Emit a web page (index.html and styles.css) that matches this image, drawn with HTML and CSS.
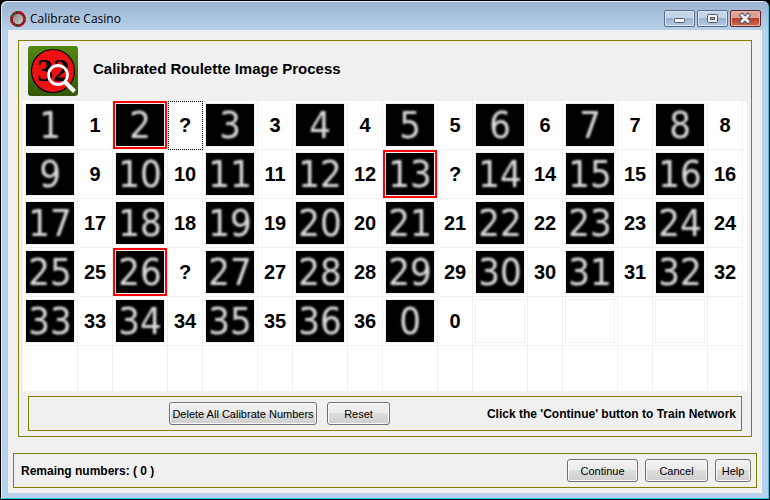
FILE: index.html
```html
<!DOCTYPE html>
<html lang="en">
<head>
  <meta charset="UTF-8">
  <meta name="viewport" content="width=device-width, initial-scale=1.0">
  <title>Calibrate Casino</title>
  <link rel="stylesheet" href="styles.css">
</head>
<body>
  <div class="window">
    <header class="titlebar">
      <svg class="app-icon" width="16" height="16" viewBox="0 0 16 16">
        <defs>
          <linearGradient id="wheel" x1="0" y1="0" x2="1" y2="1">
            <stop offset="0" stop-color="#777"/>
            <stop offset="1" stop-color="#ddd"/>
          </linearGradient>
        </defs>
        <circle cx="8" cy="8" r="6.6" fill="url(#wheel)" stroke="#222" stroke-width="2.6"/>
        <circle cx="8" cy="8" r="6.6" fill="none" stroke="#e01818" stroke-width="2.6" stroke-dasharray="1.5 1"/>
        <path d="M2.4 4.4l1.6-1.8" stroke="#1c7a2c" stroke-width="2"/>
      </svg>
      <span class="titlebar-text">Calibrate Casino</span>
      <div class="titlebar-buttons">
        <button type="button" class="win-btn" aria-label="Minimize">
          <svg width="31" height="17" viewBox="0 0 31 17"><rect x="10.500" y="8.500" width="10" height="4" rx="1" fill="#f4f4f4" stroke="#535666"/></svg>
        </button>
        <button type="button" class="win-btn" aria-label="Maximize">
          <svg width="31" height="17" viewBox="0 0 31 17"><rect x="10.500" y="4.500" width="10" height="8" rx="1" fill="#f4f4f4" stroke="#535666"/><rect x="13.500" y="7.500" width="4" height="2" fill="#9db6d0" stroke="#535666"/></svg>
        </button>
        <button type="button" class="win-btn close" aria-label="Close">
          <svg width="31" height="17" viewBox="0 0 31 17"><path d="M12 5.500l6 6M18 5.500l-6 6" stroke="#535666" stroke-width="4.600" stroke-linecap="square"/><path d="M12 5.500l6 6M18 5.500l-6 6" stroke="#f4f4f4" stroke-width="2.600" stroke-linecap="square"/></svg>
        </button>
      </div>
    </header>

    <main class="content">
      <section class="group calibrate">
        <div class="heading">
          <svg class="logo" width="50" height="50" viewBox="0 0 50 50">
            <defs>
              <linearGradient id="felt" x1="0" y1="0" x2="0" y2="1">
                <stop offset="0" stop-color="#548612"/>
                <stop offset="1" stop-color="#355808"/>
              </linearGradient>
            </defs>
            <rect width="50" height="50" rx="3" fill="url(#felt)"/>
            <circle cx="25" cy="25" r="21.500" fill="#ee1111" stroke="#100" stroke-width="1.200"/>
            <text x="25" y="35" class="logo-text">32</text>
            <circle cx="30" cy="29" r="9.500" fill="none" stroke="#fff" stroke-width="2.800"/>
            <path d="M36.500 35.500l10 10" stroke="#fff" stroke-width="4.200"/>
          </svg>
          <h1>Calibrated Roulette Image Process</h1>
        </div>

        <div class="grid-box">
          <table class="grid">
            <tr>
              <td class="pic"><div class="scan"><span>1</span></div></td><td class="num">1</td>
              <td class="pic unknown"><div class="scan"><span>2</span></div></td><td class="num focused">?</td>
              <td class="pic"><div class="scan"><span>3</span></div></td><td class="num">3</td>
              <td class="pic"><div class="scan"><span>4</span></div></td><td class="num">4</td>
              <td class="pic"><div class="scan"><span>5</span></div></td><td class="num">5</td>
              <td class="pic"><div class="scan"><span>6</span></div></td><td class="num">6</td>
              <td class="pic"><div class="scan"><span>7</span></div></td><td class="num">7</td>
              <td class="pic"><div class="scan"><span>8</span></div></td><td class="num">8</td>
            </tr>
            <tr>
              <td class="pic"><div class="scan"><span>9</span></div></td><td class="num">9</td>
              <td class="pic"><div class="scan"><span>10</span></div></td><td class="num">10</td>
              <td class="pic"><div class="scan"><span>11</span></div></td><td class="num">11</td>
              <td class="pic"><div class="scan"><span>12</span></div></td><td class="num">12</td>
              <td class="pic unknown"><div class="scan"><span>13</span></div></td><td class="num">?</td>
              <td class="pic"><div class="scan"><span>14</span></div></td><td class="num">14</td>
              <td class="pic"><div class="scan"><span>15</span></div></td><td class="num">15</td>
              <td class="pic"><div class="scan"><span>16</span></div></td><td class="num">16</td>
            </tr>
            <tr>
              <td class="pic"><div class="scan"><span>17</span></div></td><td class="num">17</td>
              <td class="pic"><div class="scan"><span>18</span></div></td><td class="num">18</td>
              <td class="pic"><div class="scan"><span>19</span></div></td><td class="num">19</td>
              <td class="pic"><div class="scan"><span>20</span></div></td><td class="num">20</td>
              <td class="pic"><div class="scan"><span>21</span></div></td><td class="num">21</td>
              <td class="pic"><div class="scan"><span>22</span></div></td><td class="num">22</td>
              <td class="pic"><div class="scan"><span>23</span></div></td><td class="num">23</td>
              <td class="pic"><div class="scan"><span>24</span></div></td><td class="num">24</td>
            </tr>
            <tr>
              <td class="pic"><div class="scan"><span>25</span></div></td><td class="num">25</td>
              <td class="pic unknown"><div class="scan"><span>26</span></div></td><td class="num">?</td>
              <td class="pic"><div class="scan"><span>27</span></div></td><td class="num">27</td>
              <td class="pic"><div class="scan"><span>28</span></div></td><td class="num">28</td>
              <td class="pic"><div class="scan"><span>29</span></div></td><td class="num">29</td>
              <td class="pic"><div class="scan"><span>30</span></div></td><td class="num">30</td>
              <td class="pic"><div class="scan"><span>31</span></div></td><td class="num">31</td>
              <td class="pic"><div class="scan"><span>32</span></div></td><td class="num">32</td>
            </tr>
            <tr>
              <td class="pic"><div class="scan"><span>33</span></div></td><td class="num">33</td>
              <td class="pic"><div class="scan"><span>34</span></div></td><td class="num">34</td>
              <td class="pic"><div class="scan"><span>35</span></div></td><td class="num">35</td>
              <td class="pic"><div class="scan"><span>36</span></div></td><td class="num">36</td>
              <td class="pic"><div class="scan"><span>0</span></div></td><td class="num">0</td>
              <td class="pic"><div class="scan empty"></div></td><td class="num"></td>
              <td class="pic"><div class="scan empty"></div></td><td class="num"></td>
              <td class="pic"><div class="scan empty"></div></td><td class="num"></td>
            </tr>
            <tr class="last">
              <td></td><td></td><td></td><td></td><td></td><td></td><td></td><td></td>
              <td></td><td></td><td></td><td></td><td></td><td></td><td></td><td></td>
            </tr>
          </table>
        </div>

        <div class="group actions">
          <button type="button" class="btn wide">Delete All Calibrate Numbers</button>
          <button type="button" class="btn">Reset</button>
          <p class="hint">Click the 'Continue' button to Train Network</p>
        </div>
      </section>

      <footer class="group footer">
        <p class="status">Remaing numbers: ( 0 )</p>
        <button type="button" class="btn main">Continue</button>
        <button type="button" class="btn">Cancel</button>
        <button type="button" class="btn small">Help</button>
      </footer>
    </main>
  </div>
</body>
</html>
```

FILE: styles.css
```css
* {
  box-sizing: border-box;
}
body {
  margin: 0;
  background-color: #000;
  font-family: "Liberation Sans", Arial, sans-serif;
  font-size: 12px;
  color: #000;
}
h1, p {
  margin: 0;
}

/* window frame */
.window {
  display: flex;
  flex-direction: column;
  min-height: 100vh;
  padding: 0 6px 6px;
  border: 1px solid #000;
  border-radius: 7px 7px 0 0;
  background: linear-gradient(#99b3d1, #b9d1ea 30px);
  box-shadow: inset 1px 1px 0 #e4eefa, inset -1px -1px 0 #2fc8ec;
}
.titlebar {
  display: flex;
  align-items: center;
  height: 29px;
  padding: 6px 2px 0 3px;
}
.app-icon {
  margin-right: 4px;
}
.titlebar-text {
  flex: 1;
  font-family: "Open Sans", "Noto Sans", sans-serif;
  font-size: 12px;
  line-height: 16px;
}
.titlebar-buttons {
  display: flex;
  gap: 2px;
}
.win-btn {
  display: flex;
  width: 31px;
  height: 17px;
  padding: 0;
  border: 1px solid #5c6c86;
  border-radius: 2px;
  background: linear-gradient(#c3d5e9 45%, #9bb5d0 50%, #b5cce4);
  box-shadow: inset 0 0 0 1px #d6e4f3;
}
.win-btn svg {
  margin: -1px;
}
.win-btn.close {
  border-color: #5a2430;
  background: linear-gradient(#e0a297 45%, #b8402a 50%, #cf6c50);
  box-shadow: inset 0 0 0 1px #e8b5a8;
}
.content {
  flex: 1;
  display: flex;
  flex-direction: column;
  justify-content: space-between;
  margin: 0 1px;
  padding: 10px 5px 5px;
  background-color: #f0f0f0;
}

/* olive group boxes */
.group {
  border: 1px solid #808000;
}
.calibrate {
  margin: 0 5px;
  padding: 5px 4px;
}
.heading {
  display: flex;
  align-items: center;
  gap: 15px;
  padding: 0 5px 5px;
}
.heading h1 {
  font-size: 15px;
  line-height: 16px;
  margin-bottom: 4px;
}
.logo-text {
  font-family: "Liberation Serif", serif;
  font-size: 32px;
  font-weight: bold;
  text-anchor: middle;
}

/* numbers grid */
.grid-box {
  background-color: #fff;
}
.grid {
  table-layout: fixed;
  border-collapse: separate;
  border-spacing: 0;
}
.grid td {
  height: 49px;
  padding: 0;
  border-right: 1px solid #f0f0f0;
  border-bottom: 1px solid #f0f0f0;
}
.grid .last td {
  height: 45px;
  border-bottom: none;
}
.grid .pic {
  width: 55px;
  padding: 2px;
}
.grid .unknown {
  padding: 0;
}
.unknown .scan {
  outline: 2px solid #f00;
  margin: 2px;
}
.grid .num {
  width: 35px;
  font-size: 20px;
  font-weight: bold;
  text-align: center;
}
.grid .focused {
  outline: 1px dotted #000;
  outline-offset: -1px;
}
.scan {
  width: 50px;
  height: 44px;
  border: 1px solid #f0f0f0;
  background-color: #000;
  font-family: "DejaVu Sans Condensed", "DejaVu Sans", sans-serif;
  font-size: 38px;
  line-height: 42px;
  text-align: center;
  color: #dcdcdc;
}
.scan span {
  display: block;
  filter: blur(1px);
}
.scan.empty {
  background-color: #fff;
}

/* buttons */
.btn {
  width: 63px;
  height: 23px;
  padding: 0;
  border: 1px solid #707070;
  border-radius: 3px;
  background: linear-gradient(#f2f2f2, #ebebeb 50%, #dddddd 50%, #cfcfcf);
  box-shadow: inset 0 0 0 1px #fbfbfb;
  font-family: "Liberation Sans", Arial, sans-serif;
  font-size: 11px;
  white-space: nowrap;
  color: #000;
}
.btn.wide {
  width: 148px;
}
.btn.main {
  width: 71px;
}
.btn.small {
  width: 36px;
}
.actions {
  display: flex;
  align-items: center;
  gap: 10px;
  margin: 5px 5px 0;
  padding: 5px 5px 5px 140px;
}
.hint {
  flex: 1;
  text-align: right;
  font-weight: bold;
}
.footer {
  display: flex;
  align-items: center;
  gap: 7px;
  padding: 5px 5px 5px 7px;
}
.status {
  flex: 1;
  font-weight: bold;
}
```
